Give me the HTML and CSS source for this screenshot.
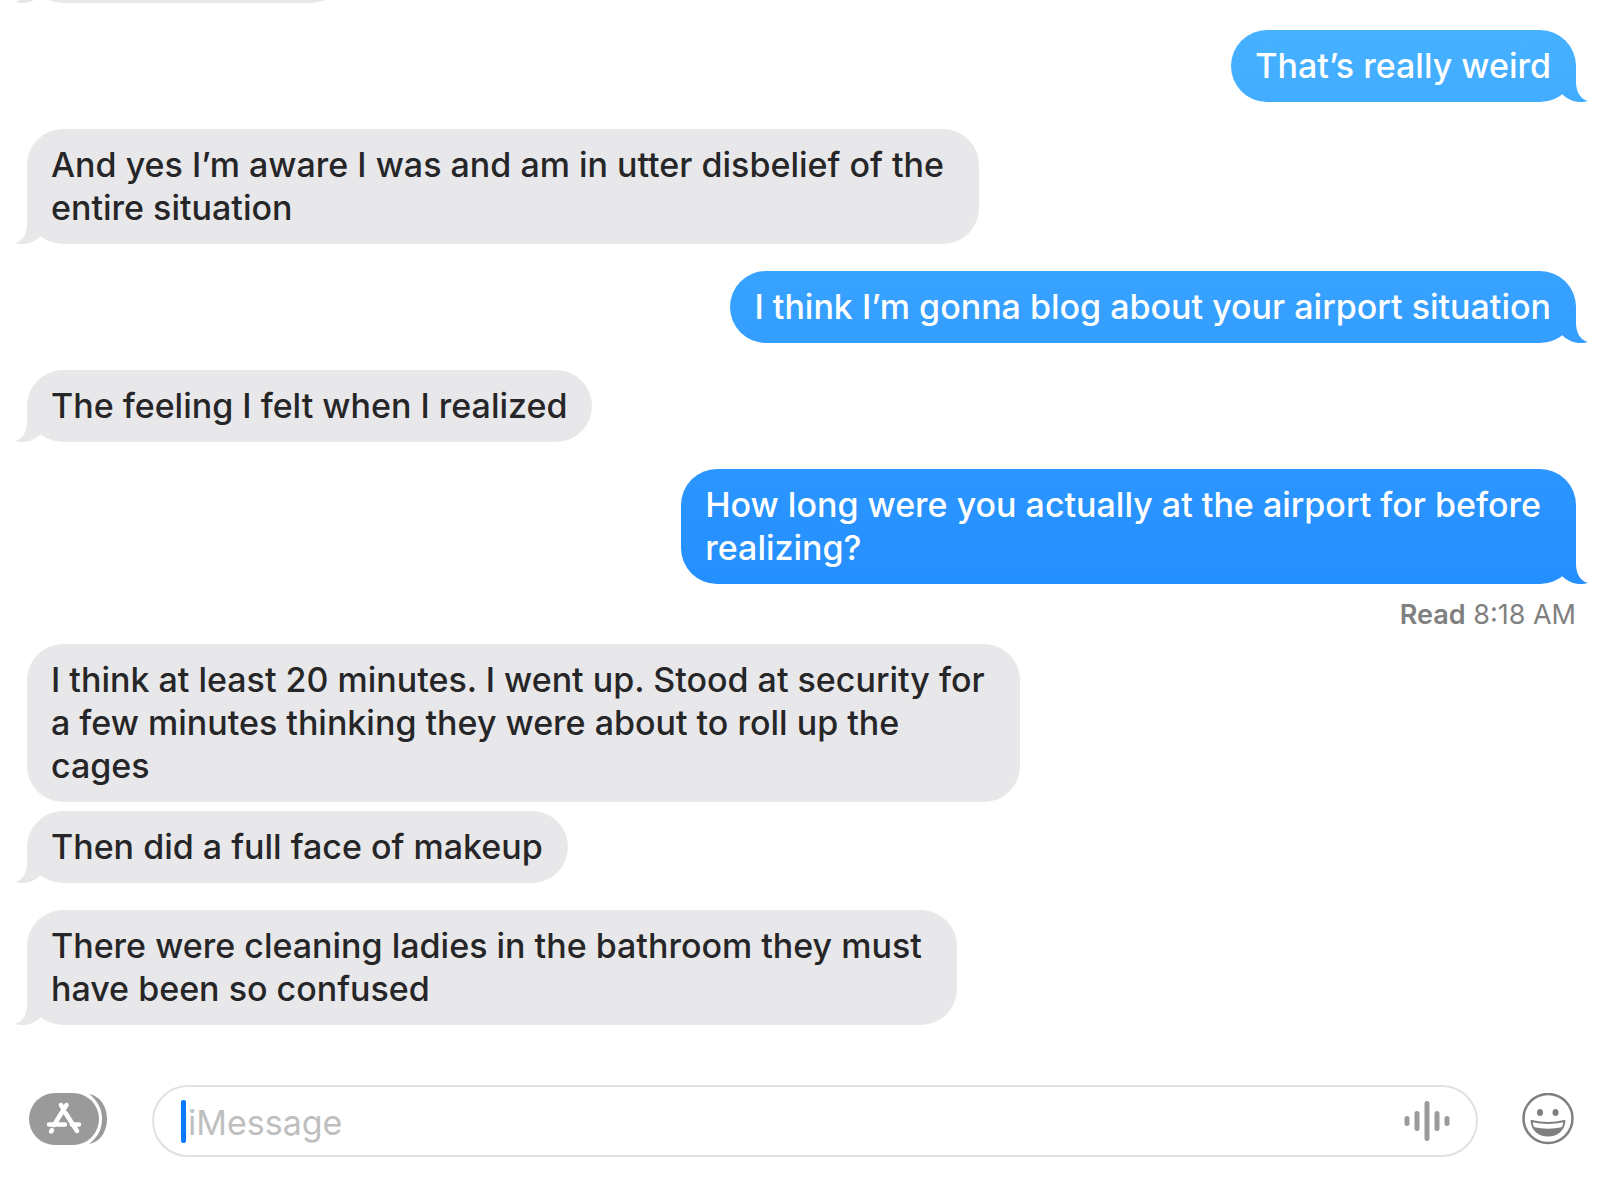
FILE: index.html
```html
<!DOCTYPE html>
<html lang="en">
<head>
    <meta charset="UTF-8">
    <meta name="viewport" content="width=device-width, initial-scale=1.0">
    <title>Messages</title>
    <link rel="stylesheet" href="styles.css">
</head>
<body>

<!-- Conversation -->
<main class="chat">
    <div class="bubble received tail older"></div>

    <p class="bubble sent tail">That’s really weird</p>

    <p class="bubble received tail multi">And yes I’m aware I was and am in utter disbelief of the<br>entire situation</p>

    <p class="bubble sent tail">I think I’m gonna blog about your airport situation</p>

    <p class="bubble received tail">The feeling I felt when I realized</p>

    <p class="bubble sent tail multi">How long were you actually at the airport for before<br>realizing?</p>
    <p class="receipt"><b>Read</b> 8:18 AM</p>

    <p class="bubble received multi">I think at least 20 minutes. I went up. Stood at security for<br>a few minutes thinking they were about to roll up the<br>cages</p>
    <p class="bubble received tail grouped">Then did a full face of makeup</p>

    <p class="bubble received tail multi">There were cleaning ladies in the bathroom they must<br>have been so confused</p>
</main>

<!-- Message bar -->
<form class="composer">
    <button type="button" class="icon-button" aria-label="Apps">
        <svg width="79" height="52" viewBox="0 0 79 52">
            <path fill="#9a9a9a" d="M60 1C71 3 78 13 78 26S71 49 60 51C68 45 73 37 73 26S68 7 60 1Z"/>
            <rect width="70" height="52" rx="26" fill="#9a9a9a"/>
            <g fill="none" stroke="#fff" stroke-width="4.500" stroke-linecap="round">
                <path d="M32 12L34.500 16M37.500 12L25 32M36.500 20L48 38M20 31.500H36M43 31.500H50M23 37L22 38.500"/>
            </g>
        </svg>
    </button>

    <div class="field">
        <span class="caret"></span>
        <input type="text" placeholder="iMessage" aria-label="iMessage">
        <button type="button" class="voice" aria-label="Record audio">
            <svg width="46" height="40" viewBox="0 0 46 40">
                <path fill="none" stroke="#9b9b9b" stroke-width="5" stroke-linecap="round" d="M3 17.500V22.500M13 12.500V27.500M23 2.500V37.500M33 12.500V27.500M43 17.500V22.500"/>
            </svg>
        </button>
    </div>

    <button type="button" class="icon-button" aria-label="Emoji">
        <svg width="52" height="52" viewBox="0 0 52 52">
            <circle cx="26" cy="25.500" r="24.500" fill="none" stroke="#7f7f7f" stroke-width="2.500"/>
            <ellipse cx="18" cy="19.500" rx="3" ry="3.500" fill="#7f7f7f"/>
            <ellipse cx="33.500" cy="19.500" rx="3" ry="3.500" fill="#7f7f7f"/>
            <path fill="none" stroke="#7f7f7f" stroke-width="2" stroke-linejoin="round" d="M9.500 28Q26 32 42.500 28C41.500 37.500 35 42.500 26 42.500S10.500 37.500 9.500 28Z"/>
            <path fill="#7f7f7f" d="M11 34Q26 37.500 41 34C38 40 33 42.500 26 42.500S14 40 11 34Z"/>
        </svg>
    </button>
</form>

</body>
</html>
```

FILE: styles.css
```css
* {
    box-sizing: border-box;
}
body {
    display: flex;
    flex-direction: column;
    height: 100vh;
    margin: 0;
    font-family: Inter, "Liberation Sans", sans-serif;
    font-size: 34px;
    line-height: 43px;
    color: #262628;
    background-color: white;
}
p {
    margin: 0;
}

/* Conversation, pinned to the newest message */
.chat {
    flex: 1;
    min-height: 0;
    display: flex;
    flex-direction: column;
    justify-content: flex-end;
    padding: 0 24px 0 27px;
    overflow: hidden;
}
.bubble {
    position: relative;
    flex-shrink: 0;
    min-height: 72px;
    margin-top: 27px;
    padding: 14px 25px 15px 24px;
    border-radius: 36px;
    font-weight: 500;
}
.multi {
    padding-right: 35px;
}
.grouped {
    margin-top: 9px;
}
.older {
    width: 320px;
}
.received {
    align-self: flex-start;
    background: #e8e8ea;
}
/* the blue gets deeper towards the bottom of the window */
.sent {
    align-self: flex-end;
    color: white;
    background: linear-gradient(#48b3ff, #228dff 52%) fixed;
}
.tail::after {
    content: "";
    position: absolute;
    right: -12px;
    bottom: 0;
    width: 30px;
    height: 38px;
    background: inherit;
    clip-path: path("M0 0H18V18C18 27 22 35 30 37C21 40 11 37 4 30L0 28Z");
}
.received.tail::after {
    right: auto;
    left: -12px;
    transform: scaleX(-1);
}
.receipt {
    align-self: flex-end;
    margin: 16px 0 -13px;
    font-size: 27px;
    line-height: 30px;
    color: #808080;
}
.receipt b {
    font-weight: 600;
}

/* Message bar */
.composer {
    display: flex;
    align-items: flex-start;
    gap: 44px;
    padding: 60px 26px 35px 29px;
}
button {
    padding: 0;
    border: none;
    background: none;
    cursor: pointer;
}
svg {
    display: block;
}
.icon-button {
    margin-top: 8px;
}
.field {
    flex: 1;
    display: flex;
    align-items: center;
    height: 72px;
    padding: 0 26px 0 27px;
    border: 2px solid #e1e1e4;
    border-radius: 36px;
}
.caret {
    width: 5px;
    height: 43px;
    border-radius: 2px;
    background-color: #0a7aff;
}
input {
    flex: 1;
    min-width: 0;
    padding: 2px 0 0 2px;
    border: none;
    outline: none;
    font: inherit;
    color: inherit;
    background: none;
}
input::placeholder {
    color: #bfbfbf;
    opacity: 1;
}
```
